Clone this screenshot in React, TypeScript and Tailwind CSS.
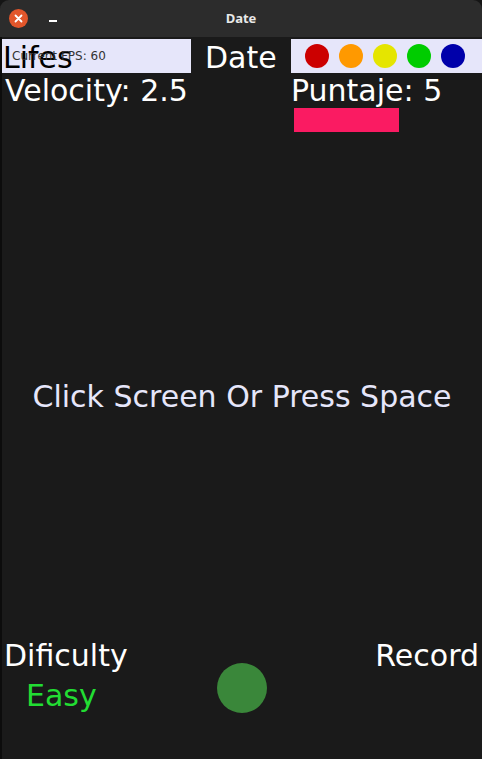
import React from "react";

const colores = ["#cc0000", "#ff9900", "#e5e500", "#00cc00", "#0000aa"];

const fuente = { fontFamily: '"DejaVu Sans", sans-serif' };

export default function App() {
  return (
    <div className="flex h-[759px] w-[482px] flex-col overflow-hidden bg-[#151515]">
      {/* barra de titulo */}
      <div className="relative flex h-[37px] shrink-0 items-center rounded-t-[9px] bg-[#2c2c2c]">
        <div className="ml-[9px] flex h-[19px] w-[19px] items-center justify-center rounded-full bg-[#e2562b]">
          <svg width="9" height="9" viewBox="0 0 9 9">
            <path d="M1.5 1.5 L7.5 7.5 M7.5 1.5 L1.5 7.5" stroke="#fff" strokeWidth="1.8" strokeLinecap="round" />
          </svg>
        </div>
        <div className="ml-[21px] mt-[5px] h-[2px] w-[8px] bg-white" />
        <span
          className="absolute left-0 right-0 text-center text-[13px] font-bold text-[#e8e8e8]"
          style={{ fontFamily: '"Noto Sans", sans-serif' }}
        >
          Date
        </span>
      </div>

      {/* pantalla del juego */}
      <div
        className="flex flex-1 flex-col border-l-2 border-[#0c0c0c] bg-[#1a1a1a] text-[30px] leading-[34px] text-white"
        style={fuente}
      >
        <div className="mt-[2px] flex h-[34px]">
          <div className="relative w-[189px] bg-[#e6e6fa] pl-[1px] pt-[2px] text-black">
            Lifes
            <span className="absolute left-[10px] top-[10px] text-[12px] leading-[14px] text-[#333]">
              Current FPS: 60
            </span>
          </div>
          <div className="w-[100px] pl-[14px] pt-[2px]">Date</div>
          <div className="flex flex-1 items-center gap-[10px] bg-[#e6e6fa] pl-[14px]">
            {colores.map((c) => (
              <div key={c} className="h-[24px] w-[24px] rounded-full" style={{ backgroundColor: c }} />
            ))}
          </div>
        </div>

        <div className="flex h-[34px] pt-[1px]">
          <div className="w-[289px] pl-[3px]">Velocity: 2.5</div>
          <div>Puntaje: 5</div>
        </div>
        <div className="ml-[292px] mt-[1px] h-[24px] w-[105px] bg-[#fa1b62]" />

        <div className="mt-[248px] text-center text-[#e6e6fa]">Click Screen Or Press Space</div>

        <div className="mt-[225px] grid grid-cols-3">
          <div className="pl-[2px]">
            <div>Dificulty</div>
            <div className="pl-[22px] pt-[6px] text-[#22dd33]">Easy</div>
          </div>
          <div className="flex justify-center pt-[24px]">
            <div className="h-[50px] w-[50px] rounded-full bg-[#3a873a]" />
          </div>
          <div className="text-right pr-[3px]">Record</div>
        </div>
      </div>
    </div>
  );
}
